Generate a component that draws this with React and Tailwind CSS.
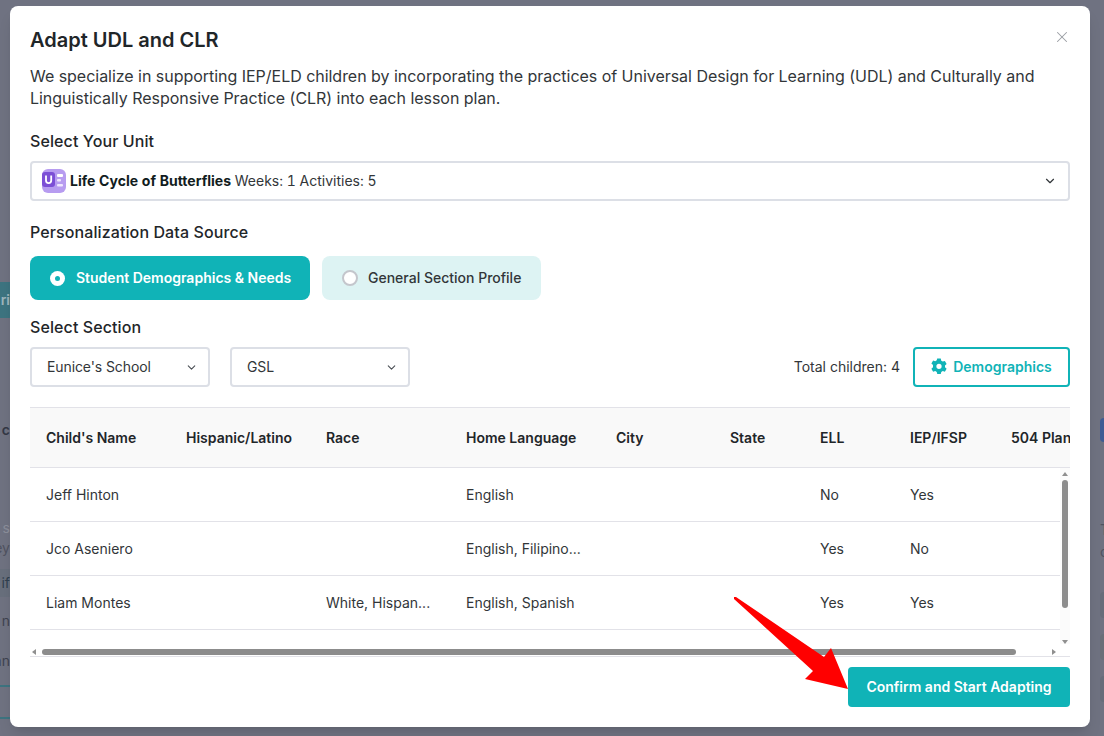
import { ChevronDown, X } from "lucide-react";

const rows = [
  { name: "Jeff Hinton", race: "", lang: "English", ell: "No", iep: "Yes" },
  { name: "Jco Aseniero", race: "", lang: "English, Filipino...", ell: "Yes", iep: "No" },
  { name: "Liam Montes", race: "White, Hispan...", lang: "English, Spanish", ell: "Yes", iep: "Yes" },
];

const headers = [
  ["Child's Name", "w-[140px]"],
  ["Hispanic/Latino", "w-[140px]"],
  ["Race", "w-[140px]"],
  ["Home Language", "w-[150px]"],
  ["City", "w-[114px]"],
  ["State", "w-[90px]"],
  ["ELL", "w-[90px]"],
  ["IEP/IFSP", "w-[101px]"],
  ["504 Plan", "w-[100px]"],
];

function GearIcon() {
  return (
    <svg width="20" height="20" viewBox="0 0 16 16" className="-m-[2px] text-[#10b3b7]">
      <path
        fill="currentColor"
        fillRule="evenodd"
        d="M6.6 1.2h2.8l.4 1.7 1.2.7 1.7-.5 1.4 2.4-1.3 1.2v1.4l1.3 1.2-1.4 2.4-1.7-.5-1.2.7-.4 1.7H6.6l-.4-1.7-1.2-.7-1.7.5-1.4-2.4 1.3-1.2V6.4L1.9 5.2l1.4-2.4 1.7.5 1.2-.7.4-1.7zM8 5.3a2.1 2.1 0 1 0 0 4.2 2.1 2.1 0 0 0 0-4.2z"
      />
    </svg>
  );
}

function UnitIcon() {
  return (
    <svg width="24" height="24" viewBox="0 0 24 24">
      <rect width="24" height="24" rx="6" fill="#b79cf0" />
      <rect x="0" y="3" width="13" height="15" rx="3" fill="#7c4fd6" />
      <path d="M4 6.5v5a2.6 2.6 0 0 0 5.2 0v-5" fill="none" stroke="#fff" strokeWidth="1.8" />
      <rect x="15" y="5" width="6" height="3" rx="1" fill="#fff" />
      <rect x="15" y="10" width="4" height="2.5" rx="1" fill="#efe7ff" />
      <rect x="15" y="15" width="6" height="2.5" rx="1" fill="#efe7ff" />
    </svg>
  );
}

function SelectBox({ label }) {
  return (
    <div className="flex h-10 w-[180px] items-center justify-between rounded border-2 border-[#dcdfe6] pl-[15px] pr-[10px] text-sm tracking-[-0.1px] text-[#323639]">
      {label}
      <ChevronDown size={13} strokeWidth={2} className="text-[#4a4f55]" />
    </div>
  );
}

// dimmed page that shows behind the modal on the left
function LeftStrip() {
  return (
    <div className="flex h-full w-[10px] shrink-0 flex-col overflow-hidden text-sm text-[#3f4350]">
      <div className="mt-[282px] flex h-[36px] items-center justify-end bg-[#3d7480] font-semibold text-[#9fb6bd]">ri</div>
      <div className="mt-[102px] flex h-5 items-center justify-end font-semibold text-[#343845]">c</div>
      <div className="mt-[78px] flex h-5 items-center justify-end text-[#8b8e9a]">s</div>
      <div className="flex h-5 items-center justify-end text-[#4f5360]">ey</div>
      <div className="mt-[11px] flex h-[28px] items-center justify-end bg-[#686f7c] text-[#30404f]">if</div>
      <div className="mt-[14px] flex h-5 items-center justify-end">n</div>
      <div className="mt-[20px] flex h-5 items-center justify-end">an</div>
      <div className="mt-[14px] h-[34px] border-y-2 border-[#3d7480]" />
    </div>
  );
}

function RightStrip() {
  return (
    <div className="flex h-full w-[14px] shrink-0 flex-col items-end overflow-hidden text-sm text-[#4f5360]">
      <div className="mt-[418px] h-[24px] w-[4px] rounded-l bg-[#3f5c94]" />
      <div className="mt-[78px] h-5 w-[4px] text-left leading-5">T</div>
      <div className="mt-[2px] h-5 w-[4px] text-left leading-5">c</div>
      <div className="mt-[30px] h-[26px] w-[4px] rounded-l-full bg-[#676d7a]" />
      <div className="mt-[16px] h-[26px] w-[4px] rounded-l-full bg-[#696f78]" />
      <div className="mt-[16px] h-[26px] w-[4px] rounded-l-full bg-[#676d7a]" />
    </div>
  );
}

export default function App() {
  return (
    <div
      className="flex h-[736px] w-[1104px] overflow-hidden bg-[#6f7281]"
      style={{ fontFamily: "Inter, sans-serif" }}
    >
      <LeftStrip />
      <div className="relative mt-[6px] flex h-[721px] w-[1080px] shrink-0 flex-col rounded-lg bg-white px-5 pt-[18px] shadow-lg">
        <X size={18} strokeWidth={1.4} className="absolute right-[19px] top-[22px] text-[#9a9da3]" />
        <h2 className="text-xl leading-8 font-semibold text-[#1f2629]">Adapt UDL and CLR</h2>
        <p className="mt-[9px] text-base leading-[22px] tracking-[-0.03px] text-[#323639]">
          We specialize in supporting IEP/ELD children by incorporating the practices of Universal Design for Learning
          (UDL) and Culturally and Linguistically Responsive Practice (CLR) into each lesson plan.
        </p>

        <div className="mt-[20px] text-base leading-6 font-medium tracking-[0.1px] text-[#1f2629]">Select Your Unit</div>
        <div className="mt-2 flex h-10 items-center justify-between rounded border-2 border-[#dcdfe6] pl-[10px] pr-[11px] text-sm text-[#323639]">
          <div className="flex items-center gap-[4px]">
            <UnitIcon />
            <span className="tabular-nums">
              <span className="font-bold text-[#111c20]">Life Cycle of Butterflies</span> Weeks: 1 Activities: 5
            </span>
          </div>
          <ChevronDown size={14} strokeWidth={2} className="text-[#323639]" />
        </div>

        <div className="mt-[19px] text-base leading-6 font-medium tracking-[0.1px] text-[#1f2629]">
          Personalization Data Source
        </div>
        <div className="mt-3 flex gap-3">
          <div className="flex h-11 w-[280px] items-center gap-[11px] rounded-lg bg-[#10b3b7] pl-5 text-sm font-semibold text-white">
            <span className="flex size-[15px] items-center justify-center rounded-full bg-white">
              <span className="size-[5px] rounded-full bg-[#10b3b7]" />
            </span>
            Student Demographics &amp; Needs
          </div>
          <div className="flex h-11 w-[219px] items-center gap-[10px] rounded-lg bg-[#ddf3f3] pl-5 text-sm font-medium text-[#323639]">
            <span className="size-[16px] rounded-full border-2 border-[#c4c6cc] bg-white" />
            General Section Profile
          </div>
        </div>

        <div className="mt-[15px] text-base leading-6 font-medium tracking-[0.1px] text-[#1f2629]">Select Section</div>
        <div className="mt-2 flex items-center">
          <div className="flex gap-5">
            <SelectBox label="Eunice's School" />
            <SelectBox label="GSL" />
          </div>
          <span className="ml-auto text-sm text-[#323639]">Total children: 4</span>
          <div className="ml-[13px] flex h-10 w-[157px] items-center justify-center gap-[6px] rounded border-2 border-[#10b3b7] text-sm font-semibold text-[#10b3b7]">
            <GearIcon />
            Demographics
          </div>
        </div>

        <div className="mt-5 overflow-hidden">
          <div className="flex h-[61px] w-[1165px] items-center border-y border-[#e2e2e8] bg-[#f9f9f9] text-sm font-semibold text-[#1f2629]">
            {headers.map(([title, width]) => (
              <div key={title} className={`${width} shrink-0 pl-4`}>
                {title}
              </div>
            ))}
          </div>
          <div className="relative h-[189px]">
            <div className="pr-[10px]">
              {rows.map((row) => (
                <div key={row.name} className="flex h-[54px] items-center border-b border-[#e2e2e8] text-sm text-[#323639]">
                  <div className="w-[140px] shrink-0 pl-4">{row.name}</div>
                  <div className="w-[140px] shrink-0" />
                  <div className="w-[140px] shrink-0 pl-4">{row.race}</div>
                  <div className="w-[150px] shrink-0 pl-4">{row.lang}</div>
                  <div className="w-[204px] shrink-0" />
                  <div className="w-[90px] shrink-0 pl-4">{row.ell}</div>
                  <div className="w-[90px] shrink-0 pl-4">{row.iep}</div>
                </div>
              ))}
            </div>
            {/* scrollbars */}
            <div className="absolute right-0 top-0 flex h-[176px] w-[10px] flex-col items-center bg-[#fbfbfb]">
              <span className="mt-[4px] border-x-[3.5px] border-b-[4px] border-x-transparent border-b-[#8f8f8f]" />
              <span className="mt-[4px] h-[128px] w-[6px] rounded-full bg-[#8c8c8c]" />
              <span className="mt-auto border-x-[3.5px] border-t-[4px] border-x-transparent border-t-[#8f8f8f]" />
            </div>
            <div className="absolute bottom-0 left-0 flex h-[9px] w-full items-center border-b border-[#e2e2e8] pl-[2px]">
              <span className="border-y-[3.5px] border-r-[4px] border-y-transparent border-r-[#8f8f8f]" />
              <span className="ml-[6px] h-[6px] w-[974px] rounded-full bg-[#8c8c8c]" />
              <span className="ml-auto mr-[14px] border-y-[3.5px] border-l-[4px] border-y-transparent border-l-[#8f8f8f]" />
            </div>
          </div>
        </div>

        <div className="mt-[10px] flex justify-end">
          <div className="flex h-10 w-[222px] items-center justify-center rounded bg-[#10b3b7] text-sm font-semibold text-white">
            Confirm and Start Adapting
          </div>
        </div>

        {/* red annotation arrow over the footer */}
        <svg className="absolute left-[722px] top-[589px]" width="124" height="104" viewBox="0 0 124 104">
          <path d="M2 2 L4 2 L92 62 L99 53 L116 94 L73 84 L81 76 L2 4 Z" fill="#ff0000" />
        </svg>
      </div>
      <RightStrip />
    </div>
  );
}
